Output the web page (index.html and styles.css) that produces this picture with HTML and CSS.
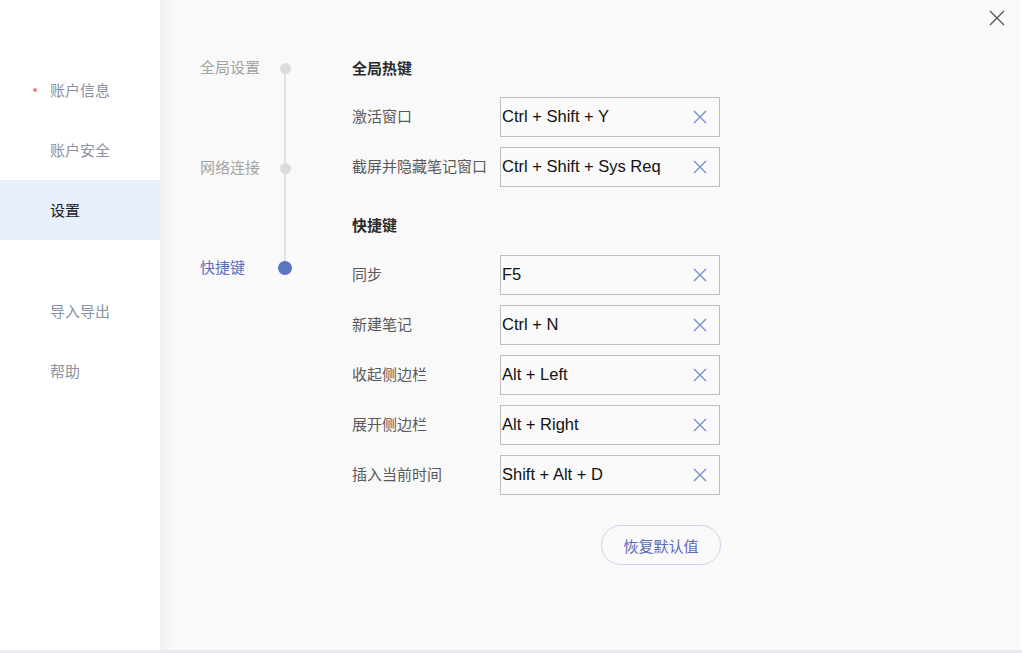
FILE: index.html
```html
<!DOCTYPE html>
<html lang="zh">
<head>
<meta charset="utf-8">
<title>设置</title>
<link rel="stylesheet" href="styles.css">
</head>
<body>
<div class="app">
  <aside class="sidebar">
    <ul class="nav">
      <li class="nav-item"><span class="badge-dot"></span>账户信息</li>
      <li class="nav-item">账户安全</li>
      <li class="nav-item active">设置</li>
      <li class="nav-spacer"></li>
      <li class="nav-item">导入导出</li>
      <li class="nav-item">帮助</li>
    </ul>
  </aside>
  <main class="main">
    <button class="close" aria-label="关闭">
      <svg width="18" height="18" viewBox="0 0 18 18"><path d="M2 2L16 16M16 2L2 16" stroke="#555" stroke-width="1.3" fill="none"/></svg>
    </button>
    <nav class="timeline">
      <div class="tl-item"><span class="tl-label">全局设置</span><span class="tl-dot"></span></div>
      <div class="tl-item"><span class="tl-label">网络连接</span><span class="tl-dot"></span></div>
      <div class="tl-item current"><span class="tl-label">快捷键</span><span class="tl-dot"></span></div>
    </nav>
    <section class="content">
      <h3 class="sec-title">全局热键</h3>
      <div class="rows">
        <div class="row"><span class="row-label">激活窗口</span><div class="keybox"><span>Ctrl + Shift + Y</span><svg class="x" viewBox="0 0 14 14"><path d="M1 1L13 13M13 1L1 13"/></svg></div></div>
        <div class="row"><span class="row-label">截屏并隐藏笔记窗口</span><div class="keybox"><span>Ctrl + Shift + Sys Req</span><svg class="x" viewBox="0 0 14 14"><path d="M1 1L13 13M13 1L1 13"/></svg></div></div>
      </div>
      <h3 class="sec-title second">快捷键</h3>
      <div class="rows">
        <div class="row"><span class="row-label">同步</span><div class="keybox"><span>F5</span><svg class="x" viewBox="0 0 14 14"><path d="M1 1L13 13M13 1L1 13"/></svg></div></div>
        <div class="row"><span class="row-label">新建笔记</span><div class="keybox"><span>Ctrl + N</span><svg class="x" viewBox="0 0 14 14"><path d="M1 1L13 13M13 1L1 13"/></svg></div></div>
        <div class="row"><span class="row-label">收起侧边栏</span><div class="keybox"><span>Alt + Left</span><svg class="x" viewBox="0 0 14 14"><path d="M1 1L13 13M13 1L1 13"/></svg></div></div>
        <div class="row"><span class="row-label">展开侧边栏</span><div class="keybox"><span>Alt + Right</span><svg class="x" viewBox="0 0 14 14"><path d="M1 1L13 13M13 1L1 13"/></svg></div></div>
        <div class="row"><span class="row-label">插入当前时间</span><div class="keybox"><span>Shift + Alt + D</span><svg class="x" viewBox="0 0 14 14"><path d="M1 1L13 13M13 1L1 13"/></svg></div></div>
      </div>
      <div class="actions"><button class="reset">恢复默认值</button></div>
    </section>
  </main>
</div>
</body>
</html>
```
FILE: styles.css
```css
* { box-sizing: border-box; }
html, body { margin: 0; padding: 0; }
body {
  background: #e9e9f0;
  font-family: "Noto Sans CJK SC", "Liberation Sans", sans-serif;
  width: 1022px;
  height: 653px;
  overflow: hidden;
}
.app {
  display: flex;
  height: 650px;
  background: #fff;
}
.sidebar {
  width: 160px;
  flex: none;
  background: #fff;
}
.nav {
  list-style: none;
  margin: 60px 0 0;
  padding: 0;
}
.nav-item {
  position: relative;
  height: 60px;
  line-height: 60px;
  padding-left: 50px;
  font-size: 15px;
  color: #8c91a3;
}
.nav-item.active {
  background: #e8effd;
  color: #1a1a1a;
}
.nav-spacer { height: 41px; }
.badge-dot {
  position: absolute;
  left: 33px;
  top: 28px;
  width: 4px;
  height: 4px;
  border-radius: 50%;
  background: #f27b8a;
}
.main {
  position: relative;
  flex: 1;
  display: flex;
  align-items: flex-start;
  padding: 57px 0 0 40px;
  background: linear-gradient(to right, #f1f1f3 0px, #f9f9f9 14px, #f9f9f9 calc(100% - 2px), #fff calc(100% - 2px));
}
.close {
  position: absolute;
  top: 9px;
  right: 16px;
  width: 18px;
  height: 18px;
  padding: 0;
  border: 0;
  background: none;
  display: block;
}
.close svg { display: block; }
.timeline {
  position: relative;
  width: 92px;
  flex: none;
}
.timeline::before {
  content: "";
  position: absolute;
  left: 84px;
  top: 11px;
  height: 200px;
  width: 2px;
  background: #e3e3e3;
}
.tl-item {
  position: relative;
  display: flex;
  align-items: center;
  justify-content: space-between;
  height: 20px;
  margin-bottom: 80px;
}
.tl-label {
  font-size: 15px;
  line-height: 20px;
  color: #a3a3a3;
}
.tl-dot {
  width: 11px;
  height: 11px;
  border-radius: 50%;
  background: #dcdcdc;
  margin-right: 1px;
  position: relative;
  top: 1px;
}
.tl-item.current .tl-label { color: #5b6fc4; }
.tl-item.current .tl-dot {
  width: 14px;
  height: 14px;
  margin-right: 0;
  background: #5876c2;
}
.content {
  margin-left: 60px;
  width: 370px;
  padding-top: 1px;
}
.sec-title {
  margin: 0 0 19px;
  font-size: 15px;
  line-height: 20px;
  font-weight: bold;
  color: #2b2b2b;
}
.sec-title.second { margin-top: 28px; margin-bottom: 20px; }
.rows {
  display: flex;
  flex-direction: column;
  gap: 10px;
}
.row {
  display: flex;
  align-items: center;
  height: 40px;
}
.row-label {
  width: 148px;
  flex: none;
  font-size: 15px;
  line-height: 20px;
  margin-top: -2px;
  color: #595959;
}
.keybox {
  width: 220px;
  height: 40px;
  border: 1px solid #bdbdbd;
  background: #fafafa;
  display: flex;
  align-items: center;
  justify-content: space-between;
  padding: 0 12px 1px 1px;
  font-family: "Liberation Sans", Arial, sans-serif;
  font-size: 16.5px;
  color: #111;
}
.x {
  width: 14px;
  height: 14px;
  stroke: #7590d6;
  stroke-width: 1.4;
  fill: none;
  margin-top: 1px;
}
.actions {
  display: flex;
  justify-content: flex-end;
  margin-top: 30px;
}
.reset {
  width: 120px;
  height: 40px;
  border: 1px solid #ccd3ec;
  border-radius: 20px;
  background: transparent;
  font-family: "Noto Sans CJK SC", sans-serif;
  font-size: 15px;
  color: #5b68b8;
  margin-right: 1px;
}
```
